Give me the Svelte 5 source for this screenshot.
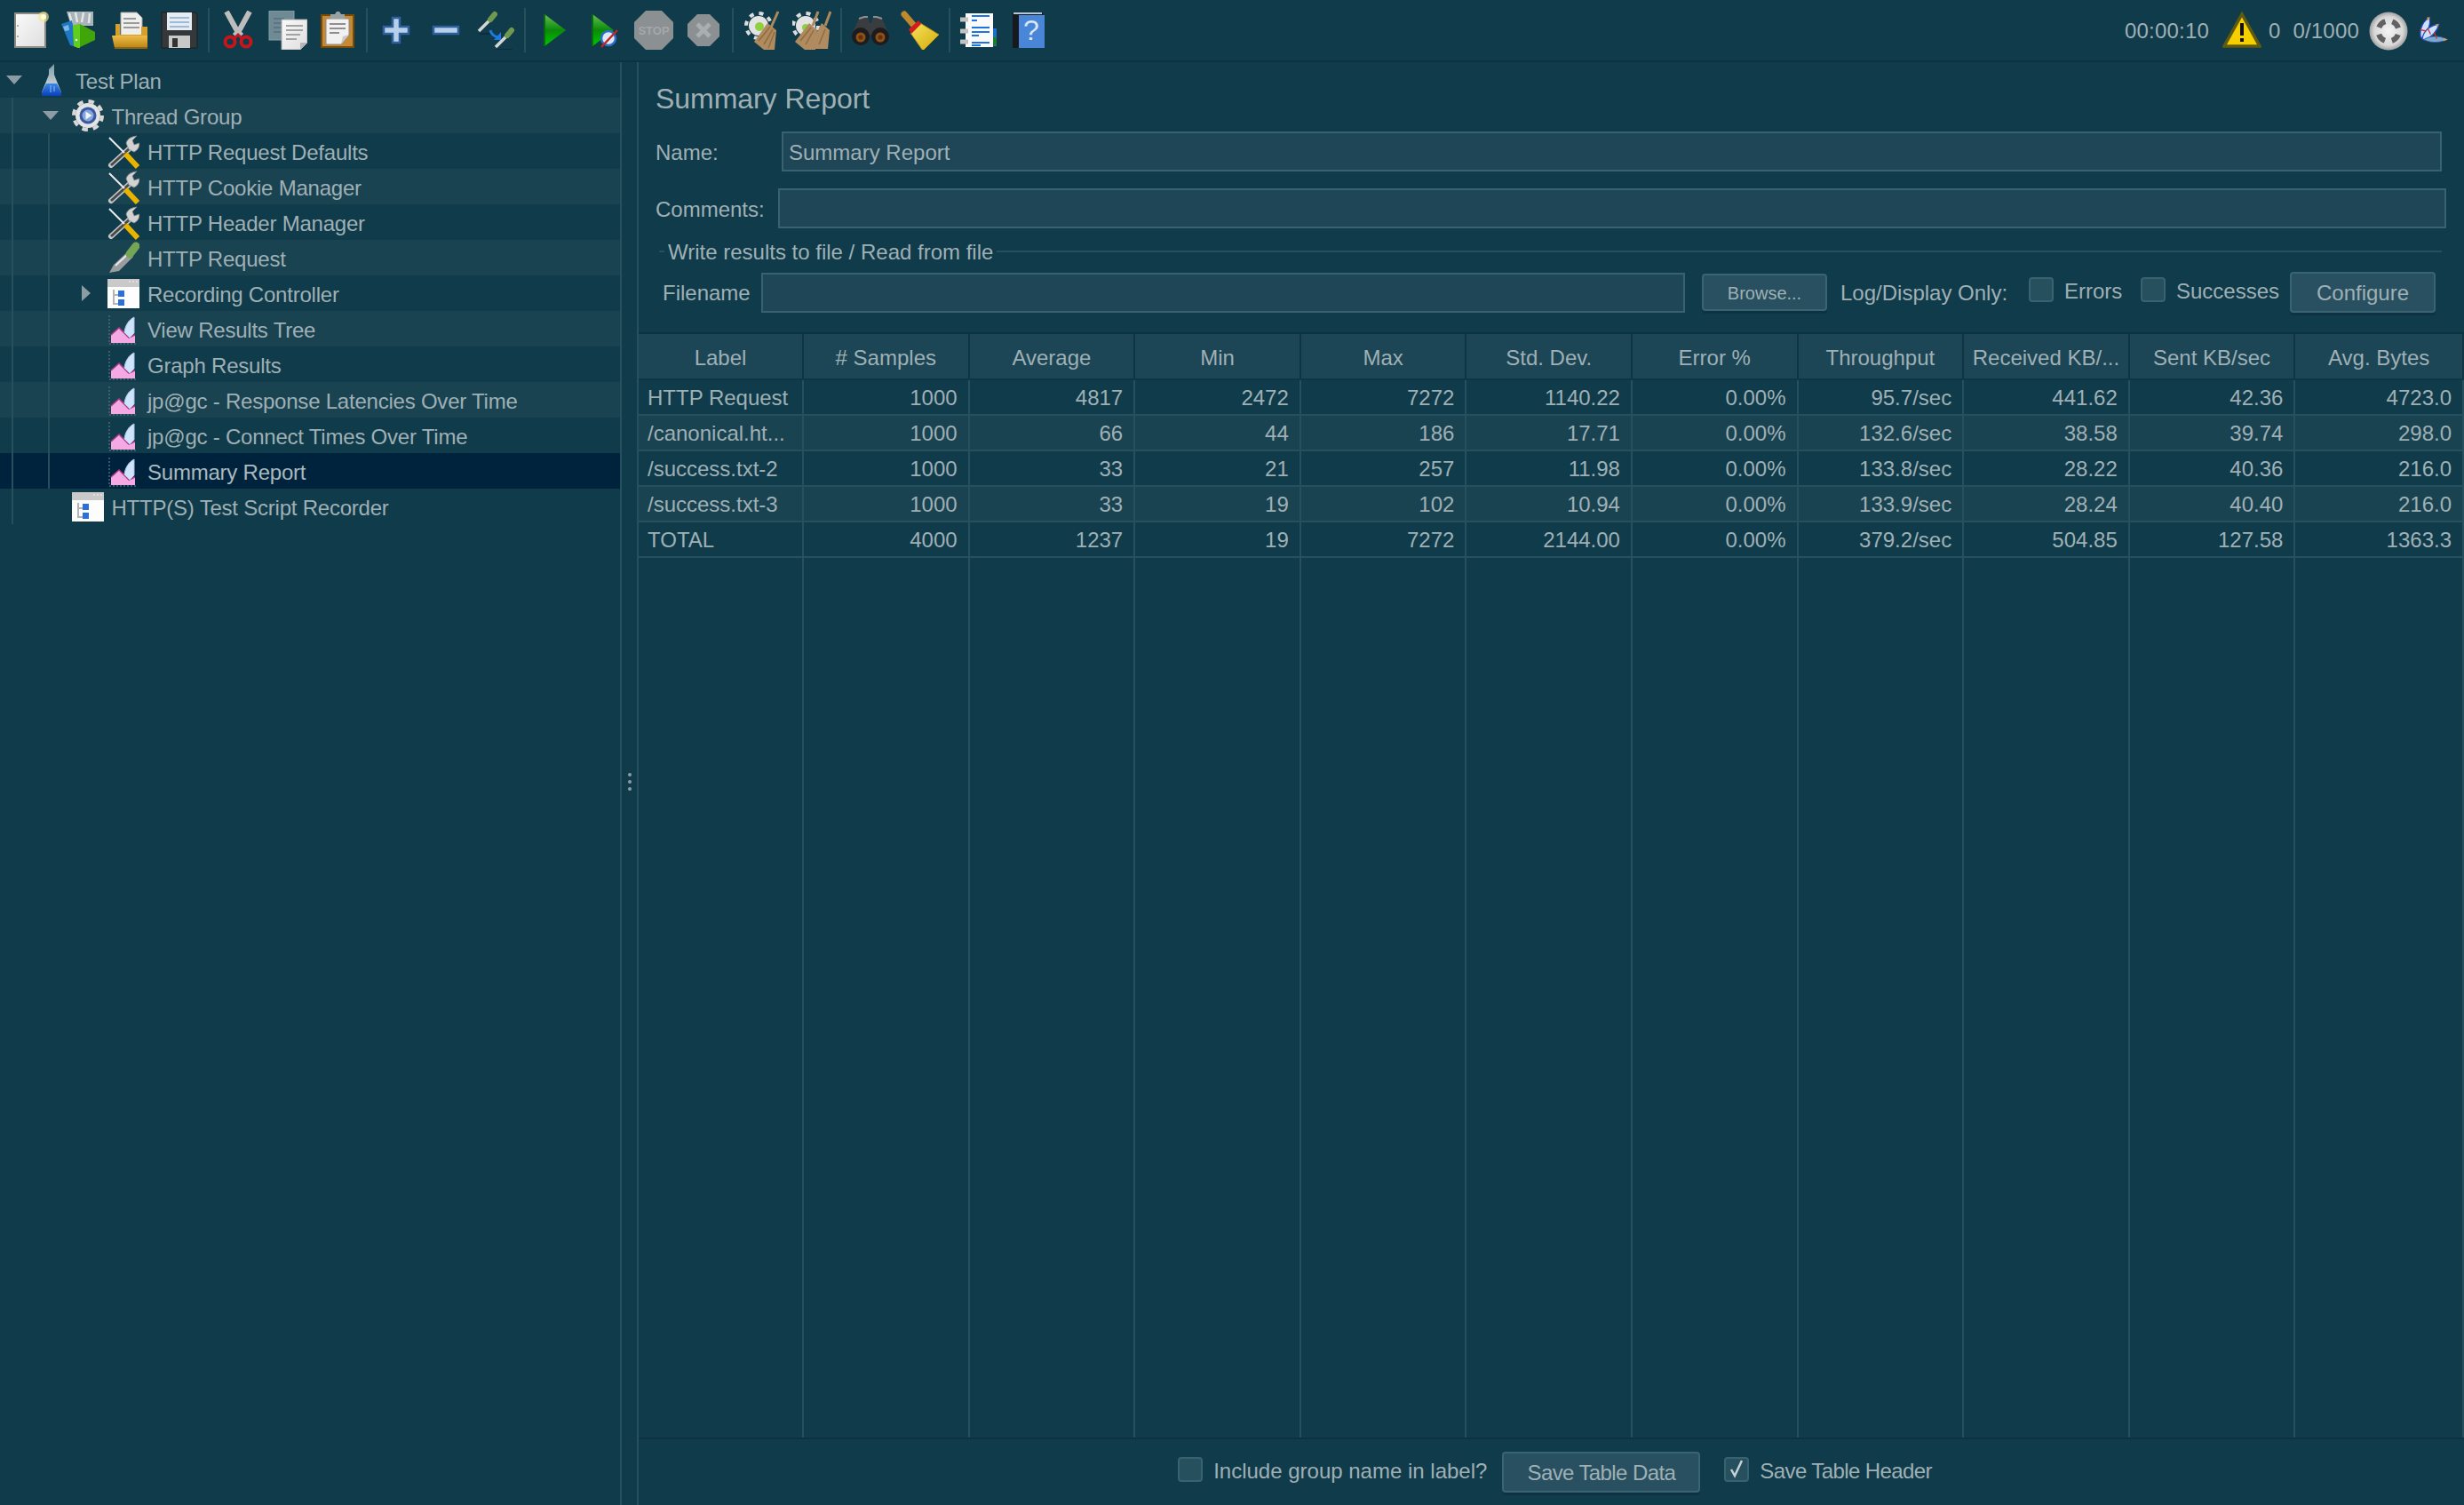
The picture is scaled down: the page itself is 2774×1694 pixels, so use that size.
<script>
  const toolbar = [
    ['new', 'templates', 'open', 'save'],
    ['cut', 'copy', 'paste'],
    ['plus', 'minus', 'toggle'],
    ['start', 'startnt', 'stop', 'shutdown'],
    ['clear', 'clearall'],
    ['search', 'reset'],
    ['func', 'help']
  ];

  const tree = [
    { label: 'Test Plan', level: 0, icon: 'flask', arrow: 'down' },
    { label: 'Thread Group', level: 1, icon: 'gear', arrow: 'down' },
    { label: 'HTTP Request Defaults', level: 2, icon: 'tools' },
    { label: 'HTTP Cookie Manager', level: 2, icon: 'tools' },
    { label: 'HTTP Header Manager', level: 2, icon: 'tools' },
    { label: 'HTTP Request', level: 2, icon: 'dropper' },
    { label: 'Recording Controller', level: 2, icon: 'recorder', arrow: 'right' },
    { label: 'View Results Tree', level: 2, icon: 'chart' },
    { label: 'Graph Results', level: 2, icon: 'chart' },
    { label: 'jp@gc - Response Latencies Over Time', level: 2, icon: 'chart' },
    { label: 'jp@gc - Connect Times Over Time', level: 2, icon: 'chart' },
    { label: 'Summary Report', level: 2, icon: 'chart', selected: true },
    { label: 'HTTP(S) Test Script Recorder', level: 1, icon: 'recorder' }
  ];

  const columns = ['Label', '# Samples', 'Average', 'Min', 'Max', 'Std. Dev.', 'Error %', 'Throughput', 'Received KB/...', 'Sent KB/sec', 'Avg. Bytes'];

  const rows = [
    ['HTTP Request', '1000', '4817', '2472', '7272', '1140.22', '0.00%', '95.7/sec', '441.62', '42.36', '4723.0'],
    ['/canonical.ht...', '1000', '66', '44', '186', '17.71', '0.00%', '132.6/sec', '38.58', '39.74', '298.0'],
    ['/success.txt-2', '1000', '33', '21', '257', '11.98', '0.00%', '133.8/sec', '28.22', '40.36', '216.0'],
    ['/success.txt-3', '1000', '33', '19', '102', '10.94', '0.00%', '133.9/sec', '28.24', '40.40', '216.0'],
    ['TOTAL', '4000', '1237', '19', '7272', '2144.00', '0.00%', '379.2/sec', '504.85', '127.58', '1363.3']
  ];
</script>

<svg class="defs" aria-hidden="true">
  <defs>
    <linearGradient id="g-page" x1="0" y1="0" x2="1" y2="1"><stop offset="0" stop-color="#fafafa" /><stop offset="1" stop-color="#dedede" /></linearGradient>
    <linearGradient id="g-folder" x1="0" y1="0" x2="0" y2="1"><stop offset="0" stop-color="#eebc4a" /><stop offset="1" stop-color="#bb8412" /></linearGradient>
    <linearGradient id="g-play" x1="0" y1="0" x2="0" y2="1"><stop offset="0" stop-color="#67bd55" /><stop offset="0.5" stop-color="#0a8a0a" /><stop offset="1" stop-color="#00c800" /></linearGradient>
    <linearGradient id="g-broom" x1="0" y1="0" x2="1" y2="1"><stop offset="0" stop-color="#f7e45a" /><stop offset="1" stop-color="#d2a90c" /></linearGradient>
    <linearGradient id="g-flask" x1="0" y1="0" x2="0" y2="1"><stop offset="0" stop-color="#7f9aa6" /><stop offset="1" stop-color="#e3e8ea" /></linearGradient>
    <linearGradient id="g-blue" x1="0" y1="0" x2="0" y2="1"><stop offset="0" stop-color="#3b88e8" /><stop offset="1" stop-color="#0a3fb8" /></linearGradient>
    <radialGradient id="g-knob"><stop offset="0" stop-color="#f4f4f4" /><stop offset="0.75" stop-color="#d8d8d8" /><stop offset="1" stop-color="#a0a0a0" /></radialGradient>

    <symbol id="new" viewBox="0 0 44 44">
      <rect x="5" y="3" width="34" height="38" fill="url(#g-page)" stroke="#8c8c86" stroke-width="2" />
      <circle cx="8" cy="17" r="1" fill="#999" /><circle cx="8" cy="29" r="1" fill="#999" />
      <circle cx="37" cy="7" r="6" fill="#f4e98a" opacity="0.65" /><circle cx="37" cy="7" r="3" fill="#fffde0" />
    </symbol>
    <symbol id="templates" viewBox="0 0 44 44">
      <path d="M7 1h30v16H12z" fill="#a9b3b8" /><path d="M10 3l3 11M17 2l2 11M26 2l-2 11M33 3l-1 11" stroke="#e3e6e7" stroke-width="2.5" />
      <path d="M1 15l12-4 6 30-8-2z" fill="#1f78c4" /><path d="M3 18l6-2 1 6-5 1z" fill="#7db9e6" />
      <path d="M14 17l8-2 17 9v9L20 42l-5-2z" fill="#3fa508" /><path d="M14 17l8-2v27l-2 0-5-2z" fill="#5fce1f" />
      <circle cx="18" cy="33" r="1.3" fill="#fff" />
    </symbol>
    <symbol id="open" viewBox="0 0 44 44">
      <path d="M12 2h18l6 6v22H12z" fill="#eeeeec" stroke="#a8a8a2" />
      <path d="M15 9h14M15 14h18M15 19h18" stroke="#9a9a9a" stroke-width="2" />
      <path d="M6 15h5v12h24v-9h7v24H6z" fill="#d4a02a" />
      <path d="M2 28h40v14H5z" fill="url(#g-folder)" /><path d="M5 42h37" stroke="#8d6410" stroke-width="2" />
    </symbol>
    <symbol id="save" viewBox="0 0 44 44">
      <path d="M2 2h38l2 2v38H2z" fill="#35383a" stroke="#1c1c1c" />
      <rect x="8" y="2" width="28" height="20" fill="#e6ecf2" />
      <path d="M11 8h22M11 13h22M11 18h22" stroke="#9ebad8" stroke-width="2" />
      <rect x="10" y="28" width="24" height="14" fill="#c9c9c9" /><rect x="14" y="31" width="6" height="10" fill="#333" />
    </symbol>
    <symbol id="cut" viewBox="0 0 44 44">
      <path d="M9 1l12 22 5 5M35 1L23 23l-5 5" fill="none" stroke="#bdbdbd" stroke-width="6" />
      <circle cx="13" cy="35" r="5.5" fill="none" stroke="#c6161c" stroke-width="4" />
      <circle cx="31" cy="35" r="5.5" fill="none" stroke="#c6161c" stroke-width="4" />
      <path d="M18 31l4-4 4 4" fill="none" stroke="#c6161c" stroke-width="3" />
    </symbol>
    <symbol id="copy" viewBox="0 0 44 44">
      <rect x="1" y="0" width="28" height="33" fill="#6f8a95" stroke="#86a0aa" />
      <path d="M6 9h12M6 14h12M6 19h12M6 24h12" stroke="#5b7682" stroke-width="2" />
      <path d="M15 10h29v26l-8 8H15z" fill="url(#g-page)" stroke="#a8a8a8" />
      <path d="M20 17h19M20 22h19M20 27h16M20 32h12" stroke="#a3a3a3" stroke-width="2" />
      <path d="M36 44v-8h8z" fill="#b5b5b5" />
    </symbol>
    <symbol id="paste" viewBox="0 0 44 44">
      <rect x="4" y="5" width="36" height="36" fill="#c68a34" stroke="#7a4a08" stroke-width="2" />
      <path d="M9 9h26v18l-9 11H9z" fill="#f1f1f1" stroke="#8a8a8a" />
      <path d="M13 15h18M13 20h18M13 25h11" stroke="#8f8f8f" stroke-width="2" />
      <path d="M26 38l2-9 7-2z" fill="#c9c9c9" />
      <path d="M14 9V4h5l2-3h3l2 3h4v5z" fill="#9aa1a3" />
    </symbol>
    <symbol id="plus" viewBox="0 0 44 44">
      <path d="M18 8h8v10h10v8H26v10h-8V26H8v-8h10z" fill="#b7d0ea" stroke="#2f5f9e" stroke-width="2.5" />
    </symbol>
    <symbol id="minus" viewBox="0 0 44 44">
      <rect x="8" y="18" width="28" height="8" fill="#b7d0ea" stroke="#2f5f9e" stroke-width="2.5" />
    </symbol>
    <symbol id="toggle" viewBox="0 0 44 44">
      <path d="M4 26h16M23 44h18" stroke="#0b2b38" stroke-width="1.5" />
      <path d="M3 23L16 10" stroke="#d5d5d5" stroke-width="3.5" /><path d="M16 10l5-6" stroke="#6f9a4e" stroke-width="6" stroke-linecap="round" />
      <path d="M22 41l13-13" stroke="#d5d5d5" stroke-width="3.5" /><path d="M35 28l5-6" stroke="#6f9a4e" stroke-width="6" stroke-linecap="round" />
      <path d="M16 22c1 4 4 7 9 8" fill="none" stroke="#1f78e0" stroke-width="3" /><path d="M28 24v9h-8z" fill="#1f78e0" />
    </symbol>
    <symbol id="start" viewBox="0 0 44 44">
      <path d="M11 4l24 18-24 18z" fill="url(#g-play)" /><path d="M11 4v36" stroke="#0a6a12" stroke-width="2" />
    </symbol>
    <symbol id="startnt" viewBox="0 0 44 44">
      <path d="M9 4l24 18-24 18z" fill="url(#g-play)" /><path d="M9 4v36" stroke="#0a6a12" stroke-width="2" />
      <circle cx="27" cy="31" r="8" fill="#dfe9f5" stroke="#2d6fc4" stroke-width="2.5" />
      <path d="M19 41l18-19" stroke="#c02525" stroke-width="2.5" />
    </symbol>
    <symbol id="stop" viewBox="0 0 44 44">
      <path d="M13 0h18l13 13v18L31 44H13L0 31V13z" fill="#8b9092" />
      <text x="22" y="27" text-anchor="middle" class="stop-text">STOP</text>
    </symbol>
    <symbol id="shutdown" viewBox="0 0 44 44">
      <path d="M15 4h14l11 11v14L29 40H15L4 29V15z" fill="#8b9092" />
      <path d="M15 15l14 14M29 15L15 29" stroke="#a9aeb0" stroke-width="5" />
    </symbol>
    <symbol id="clear" viewBox="0 0 44 44">
      <circle cx="18" cy="17" r="11" fill="#e3e3e3" />
      <circle cx="18" cy="17" r="14" fill="none" stroke="#dcdcdc" stroke-width="4" stroke-dasharray="5 6" />
      <circle cx="19" cy="18" r="5" fill="#8ed03e" />
      <path d="M40 1l-8 18" stroke="#a98a60" stroke-width="3" />
      <path d="M28 14l10 8-2 22H24l-11-9z" fill="#b08b5f" />
      <path d="M18 34l13-16M24 38l10-17M29 42l7-18" stroke="#8f6c42" stroke-width="1.5" />
    </symbol>
    <symbol id="clearall" viewBox="0 0 44 44">
      <circle cx="15" cy="17" r="11" fill="#e3e3e3" />
      <circle cx="15" cy="17" r="14" fill="none" stroke="#dcdcdc" stroke-width="4" stroke-dasharray="5 6" />
      <circle cx="15" cy="19" r="4" fill="#8ed03e" />
      <path d="M29 1l-6 16M43 1l-6 16" stroke="#a98a60" stroke-width="3" />
      <path d="M19 14l9 8-2 22H14L3 35z" fill="#b08b5f" />
      <path d="M33 14l9 8-2 21H26l-4-8z" fill="#b08b5f" />
      <path d="M9 34l12-15M15 38l9-16M30 38l7-17" stroke="#8f6c42" stroke-width="1.5" />
    </symbol>
    <symbol id="search" viewBox="0 0 44 44">
      <path d="M9 9l6-2h4l2 7h2l2-7h4l6 2 8 18H1z" fill="#3a3d40" />
      <path d="M9 9l6-2h4M25 7h4l6 2" fill="none" stroke="#8d9093" stroke-width="2" />
      <circle cx="11" cy="29" r="10" fill="#1c1c1e" /><circle cx="33" cy="29" r="10" fill="#1c1c1e" />
      <circle cx="11" cy="30" r="5.5" fill="#8e4f18" /><circle cx="33" cy="30" r="5.5" fill="#8e4f18" />
      <circle cx="11" cy="30" r="2.5" fill="#5c3210" /><circle cx="33" cy="30" r="2.5" fill="#5c3210" />
    </symbol>
    <symbol id="reset" viewBox="0 0 44 44">
      <path d="M4 4l12 14" stroke="#c08a2c" stroke-width="7" stroke-linecap="round" />
      <path d="M11 25l11-11 21 13-18 18z" fill="url(#g-broom)" stroke="#b59410" />
      <path d="M9 21L20 11l3 4-11 11z" fill="#d41c1c" />
    </symbol>
    <symbol id="func" viewBox="0 0 44 44">
      <path d="M38 20h4v20h-4z" fill="#1e6fc8" /><path d="M38 30h4v9h-4z" fill="#1f7d2a" />
      <rect x="7" y="3" width="31" height="38" fill="#fafafa" />
      <path d="M1 10h9M1 23h9M1 35h9" stroke="#c2c2c2" stroke-width="5" />
      <path d="M14 6h20M14 11h6M14 19h20M14 24h20M14 28h8M14 36h20M14 39h10" stroke="#1f72e2" stroke-width="2" />
    </symbol>
    <symbol id="help" viewBox="0 0 44 44">
      <rect x="4" y="2" width="34" height="40" fill="#161a1e" />
      <rect x="11" y="5" width="29" height="37" fill="#4a86d8" /><path d="M5 3h32" stroke="#b8c6d8" stroke-width="2" />
      <text x="25" y="33" text-anchor="middle" class="help-text">?</text>
    </symbol>
    <symbol id="warn" viewBox="0 0 44 44">
      <path d="M22 3l20 36H2z" fill="#f5cf00" stroke="#5f5a10" stroke-width="3.5" stroke-linejoin="miter" />
      <rect x="20" y="13" width="4" height="14" fill="#111" /><rect x="20" y="30" width="4" height="4" fill="#111" />
    </symbol>
    <symbol id="knob" viewBox="0 0 44 44">
      <circle cx="22" cy="22" r="21.5" fill="url(#g-knob)" />
      <circle cx="22" cy="22" r="11.5" fill="none" stroke="#626264" stroke-width="6" stroke-dasharray="10 8.06" stroke-dashoffset="-4.03" />
    </symbol>
    <symbol id="feather" viewBox="0 0 44 44">
      <path d="M6 30C4 18 10 8 18 4c1 10-3 20-9 27z" fill="#cfe0fa" stroke="#1f4fc0" stroke-width="1.5" />
      <path d="M8 32c2-10 10-17 22-19-2 9-10 17-19 21z" fill="#cfe0fa" stroke="#1f4fc0" stroke-width="1.5" />
      <path d="M10 33c8-5 20-6 31 0-9 4-20 5-29 1z" fill="#7fa7d0" stroke="#2b5db0" stroke-width="1" />
      <path d="M14 4l4 0-2 5zM26 13l4 0-3 4zM36 31l5 2-5 2z" fill="#f29a2e" />
      <path d="M5 20l8 2M15 18l4 8M24 24l3 8" stroke="#d03030" stroke-width="1.5" />
    </symbol>

    <symbol id="flask" viewBox="0 0 36 40">
      <path d="M15 8l6-6v12l8 20v3H7v-3l8-20z" fill="url(#g-flask)" />
      <path d="M12 24h12l5 10v4H7v-4z" fill="url(#g-blue)" />
      <path d="M17 26v8M21 27v6" stroke="#8ac0f5" stroke-width="1" />
    </symbol>
    <symbol id="gear" viewBox="0 0 36 40">
      <circle cx="18" cy="20" r="14" fill="#e3e3e3" />
      <circle cx="18" cy="20" r="16" fill="none" stroke="#d8d8d8" stroke-width="4" stroke-dasharray="6.5 6.07" />
      <circle cx="18" cy="20" r="9.5" fill="#3658a4" /><circle cx="18" cy="20" r="6.5" fill="#8aa6d8" />
      <path d="M15.5 15.5l7 4.5-7 4.5z" fill="#f1f4fa" />
    </symbol>
    <symbol id="tools" viewBox="0 0 36 40">
      <path d="M4 36L26 16" stroke="#c4c4c4" stroke-width="6" stroke-linecap="round" /><path d="M4 36L26 16" stroke="#47494b" stroke-width="3" />
      <path d="M24 18L21 11Q23 4 33 3L28 8 30 13 36 11Q36 18 30 21Z" fill="#d2d2d2" stroke="#8d8d8d" stroke-width="0.8" />
      <path d="M2 5l17 17" stroke="#ececec" stroke-width="2" />
      <path d="M20 23l14 15" stroke="#e8b400" stroke-width="6" />
    </symbol>
    <symbol id="dropper" viewBox="0 0 36 40">
      <path d="M2 37l5-9 16-15 6 6-16 16z" fill="#9a9d9f" /><path d="M9 29L24 15" stroke="#e8e8e8" stroke-width="2" />
      <path d="M25 16l7-9" stroke="#74a655" stroke-width="9" stroke-linecap="round" />
    </symbol>
    <symbol id="recorder" viewBox="0 0 36 40">
      <rect x="0" y="4" width="37" height="33" fill="#fdfdfd" />
      <rect x="0" y="4" width="37" height="9" fill="#c9c9c9" /><path d="M24 7h2M28 7h2M32 7h2" stroke="#e8e8e8" stroke-width="1.5" />
      <path d="M7 16v16h6M7 22h6" fill="none" stroke="#b5b5b5" stroke-width="2" />
      <rect x="12" y="17" width="7" height="7" fill="#2b6fd8" /><rect x="12" y="27" width="7" height="7" fill="#2b6fd8" />
    </symbol>
    <symbol id="chart" viewBox="0 0 36 40">
      <path d="M2 5v32h32" fill="none" stroke="#4c6a76" stroke-width="1.5" stroke-dasharray="2 2" />
      <path d="M4 36V27l9-8 6 6 5 5 7-3v9z" fill="#f5a9e4" /><path d="M4 27l9-8 6 6 5 5 7-3" fill="none" stroke="#b43a8a" stroke-width="1.5" />
      <path d="M19 24c1-8 5-14 11-17v18l-5 5z" fill="#cfe3fb" stroke="#a9c8ee" />
    </symbol>
  </defs>
</svg>

<div class="app">
  <header class="toolbar">
    <div class="tools">
      {#each toolbar as group, i}
        {#if i > 0}<span class="sep"></span>{/if}
        {#each group as id}
          <span class="tool"><svg width="44" height="44"><use href="#{id}" /></svg></span>
        {/each}
      {/each}
    </div>
    <div class="status">
      <span class="time">00:00:10</span>
      <svg class="warn" width="44" height="44"><use href="#warn" /></svg>
      <span class="errs">0</span>
      <span class="threads">0/1000</span>
      <svg class="knob" width="44" height="44"><use href="#knob" /></svg>
      <svg class="feather" width="38" height="38"><use href="#feather" /></svg>
    </div>
  </header>

  <main class="main">
    <nav class="tree">
      <span class="guide one"></span>
      <span class="guide two"></span>
      {#each tree as item}
        <div class="row" class:selected={item.selected} style="padding-left: {item.level * 40.5}px">
          <span class="arrow">
            {#if item.arrow === 'down'}<i class="tri-down"></i>{/if}
            {#if item.arrow === 'right'}<i class="tri-right"></i>{/if}
          </span>
          <svg class="node" width="36" height="40"><use href="#{item.icon}" /></svg>
          <span class="name">{item.label}</span>
        </div>
      {/each}
    </nav>

    <div class="splitter"><i></i><i></i><i></i></div>

    <section class="panel">
      <div class="form">
        <h1>Summary Report</h1>
        <div class="field name-field">
          <label for="name">Name:</label>
          <input id="name" value="Summary Report" />
        </div>
        <div class="field comments-field">
          <label for="comments">Comments:</label>
          <input id="comments" />
        </div>
        <div class="legend"><span>Write results to file / Read from file</span></div>
        <div class="file-row">
          <label for="filename">Filename</label>
          <input id="filename" />
          <button class="browse">Browse...</button>
          <span class="log">Log/Display Only:</span>
          <span class="box"></span><span class="opt errors">Errors</span>
          <span class="box"></span><span class="opt successes">Successes</span>
          <button class="configure">Configure</button>
        </div>
      </div>

      <div class="table">
        {#each columns as col}
          <div class="th">{col}</div>
        {/each}
        {#each rows as row, r}
          {#each row as cell, c}
            <div class="td" class:first={c === 0} class:alt={r % 2 === 1}>{cell}</div>
          {/each}
        {/each}
        {#each columns as col}
          <div class="fill"></div>
        {/each}
      </div>

      <footer class="bottom">
        <span class="box"></span><span class="opt group">Include group name in label?</span>
        <button class="save">Save Table Data</button>
        <span class="box checked"><svg width="18" height="24" viewBox="0 0 18 24"><path d="M3 12l4 7 8-17" fill="none" stroke="#c6d2d6" stroke-width="2.5" /></svg></span>
        <span class="opt header-opt">Save Table Header</span>
      </footer>
    </section>
  </main>
</div>

<style>
  :global(body) {
    margin: 0;
    background-color: #103b4b;
  }

  .defs {
    position: absolute;
    width: 0;
    height: 0;
  }

  .stop-text {
    font: bold 13px "Liberation Sans", sans-serif;
    fill: #a3a8aa;
  }

  .help-text {
    font: 32px "Liberation Sans", sans-serif;
    fill: #dbe7f6;
  }

  .app {
    display: flex;
    flex-direction: column;
    height: 100vh;
    width: 100%;
    overflow: hidden;
    background-color: #103b4b;
    color: #9fb0b5;
    font-family: "Liberation Sans", Arial, sans-serif;
    font-size: 24px;
  }

  .toolbar {
    display: flex;
    justify-content: space-between;
    align-items: center;
    height: 68px;
    flex: none;
    border-bottom: 2px solid #0c3241;
  }

  .tools {
    display: flex;
    align-items: center;
    padding-left: 6px;
  }

  .tool {
    display: flex;
    justify-content: center;
    width: 56px;
  }

  .sep {
    width: 2px;
    height: 50px;
    margin: 0 4px;
    background-color: #27505f;
  }

  .status {
    display: flex;
    align-items: center;
    padding-right: 16px;
    padding-top: 1px;
  }

  .time {
    letter-spacing: 0.2px;
  }

  .warn {
    margin-left: 15px;
  }

  .errs {
    margin-left: 8px;
  }

  .threads {
    margin-left: 14px;
    letter-spacing: 0.2px;
  }

  .knob {
    margin-left: 11px;
  }

  .feather {
    margin-left: 9px;
  }

  .main {
    display: flex;
    flex: 1;
    min-height: 0;
  }

  .tree {
    position: relative;
    width: 698px;
    flex: none;
  }

  .guide {
    position: absolute;
    width: 2px;
    background-color: #27505f;
  }

  .guide.one {
    left: 13px;
    top: 40px;
    height: 480px;
  }

  .guide.two {
    left: 54px;
    top: 80px;
    height: 400px;
  }

  .row {
    display: flex;
    align-items: center;
    height: 40px;
    box-sizing: border-box;
    white-space: nowrap;
  }

  .row:nth-of-type(even) {
    background-color: #1a4352;
  }

  .row:nth-of-type(odd) {
    background-color: #103b4b;
  }

  .row.selected {
    background-color: #00233d;
    color: #a9b9bd;
  }

  .arrow {
    display: flex;
    justify-content: center;
    width: 32px;
    flex: none;
  }

  .tri-down {
    border-left: 9px solid transparent;
    border-right: 9px solid transparent;
    border-top: 10px solid #8b9da3;
  }

  .tri-right {
    border-top: 9px solid transparent;
    border-bottom: 9px solid transparent;
    border-left: 10px solid #8b9da3;
  }

  .node {
    flex: none;
    margin-left: 8px;
    margin-right: 9px;
  }

  .name {
    padding-top: 3px;
    letter-spacing: -0.22px;
  }

  .splitter {
    display: flex;
    flex-direction: column;
    align-items: center;
    justify-content: center;
    gap: 4px;
    width: 21px;
    flex: none;
    box-sizing: border-box;
    padding-bottom: 4px;
    border-left: 2px solid #27505f;
    border-right: 2px solid #27505f;
  }

  .splitter i {
    width: 4px;
    height: 4px;
    border-radius: 50%;
    background-color: #8b9da3;
  }

  .panel {
    display: flex;
    flex-direction: column;
    flex: 1;
    min-width: 0;
  }

  .form {
    padding-left: 19px;
    flex: none;
  }

  h1 {
    display: flex;
    align-items: center;
    height: 74px;
    padding-top: 4px;
    margin: 0;
    font-size: 32px;
    font-weight: normal;
    letter-spacing: -0.05px;
  }

  label {
    padding-top: 2px;
  }

  input {
    height: 45px;
    box-sizing: border-box;
    padding: 2px 6px 0;
    background-color: #1e4656;
    border: 2px solid #38626f;
    color: #9fb0b5;
    font: inherit;
    outline: none;
  }

  .field {
    display: flex;
    align-items: center;
  }

  .field input {
    flex: 1;
    min-width: 0;
  }

  .name-field {
    margin-bottom: 19px;
    margin-right: 25px;
  }

  .name-field label {
    width: 142px;
  }

  .comments-field {
    margin-right: 20px;
  }

  .comments-field label {
    width: 138px;
  }

  .legend {
    display: flex;
    align-items: center;
    gap: 4px;
    height: 26px;
    margin: 13px 25px 10px 4px;
  }

  .legend span {
    padding-top: 2px;
  }

  .legend::before {
    content: "";
    width: 6px;
    height: 2px;
    background-color: #27505f;
  }

  .legend::after {
    content: "";
    flex: 1;
    height: 2px;
    background-color: #27505f;
  }

  .file-row {
    display: flex;
    align-items: center;
    height: 46px;
    margin-left: 8px;
    margin-bottom: 22px;
  }

  .file-row label {
    width: 111px;
  }

  .file-row input {
    width: 1040px;
    flex: none;
  }

  button {
    box-sizing: border-box;
    background-color: #285060;
    border: 2px solid #3a6472;
    border-radius: 4px;
    box-shadow: 0 3px 0 #0d3343;
    color: #9fb0b5;
    font: inherit;
    padding: 2px 0 0;
  }

  .browse {
    width: 141px;
    height: 42px;
    margin-left: 19px;
    font-size: 20px;
  }

  .log {
    margin-left: 15px;
    width: 212px;
    padding-top: 2px;
    white-space: nowrap;
  }

  .box {
    display: flex;
    justify-content: center;
    align-items: center;
    width: 28px;
    height: 28px;
    flex: none;
    box-sizing: border-box;
    background-color: #27505f;
    border: 2px solid #38626f;
    border-radius: 4px;
    margin-bottom: 6px;
  }

  .opt {
    white-space: nowrap;
    margin-left: 12px;
    margin-bottom: 2px;
  }

  .errors {
    width: 86px;
  }

  .successes {
    width: 128px;
  }

  .configure {
    width: 164px;
    height: 46px;
  }

  .table {
    flex: 1;
    min-height: 0;
    display: grid;
    grid-template-columns: 186px repeat(9, 186.6px) 1fr;
    grid-template-rows: 52px repeat(5, 40px) 1fr;
    border-top: 2px solid #0c3241;
    overflow: hidden;
  }

  .th {
    display: flex;
    align-items: center;
    justify-content: center;
    box-sizing: border-box;
    padding-top: 3px;
    background-color: #1c4655;
    border-right: 2px solid #0f3545;
    border-bottom: 2px solid #0f3545;
    white-space: nowrap;
  }

  .td {
    display: flex;
    align-items: center;
    justify-content: flex-end;
    box-sizing: border-box;
    padding: 2px 12px 0 10px;
    border-right: 2px solid #27505f;
    border-bottom: 2px solid #27505f;
    white-space: nowrap;
  }

  .td.first {
    justify-content: flex-start;
  }

  .td.alt {
    background-color: #1a4352;
  }

  .fill {
    border-right: 2px solid #27505f;
  }

  .bottom {
    display: flex;
    align-items: center;
    justify-content: center;
    height: 76px;
    flex: none;
    padding-left: 8px;
    box-sizing: border-box;
    border-top: 2px solid #0c3241;
  }

  .group {
    margin-right: 17px;
  }

  .save {
    width: 223px;
    height: 46px;
    margin-right: 27px;
    letter-spacing: -0.6px;
  }

  .header-opt {
    letter-spacing: -0.6px;
  }
</style>
